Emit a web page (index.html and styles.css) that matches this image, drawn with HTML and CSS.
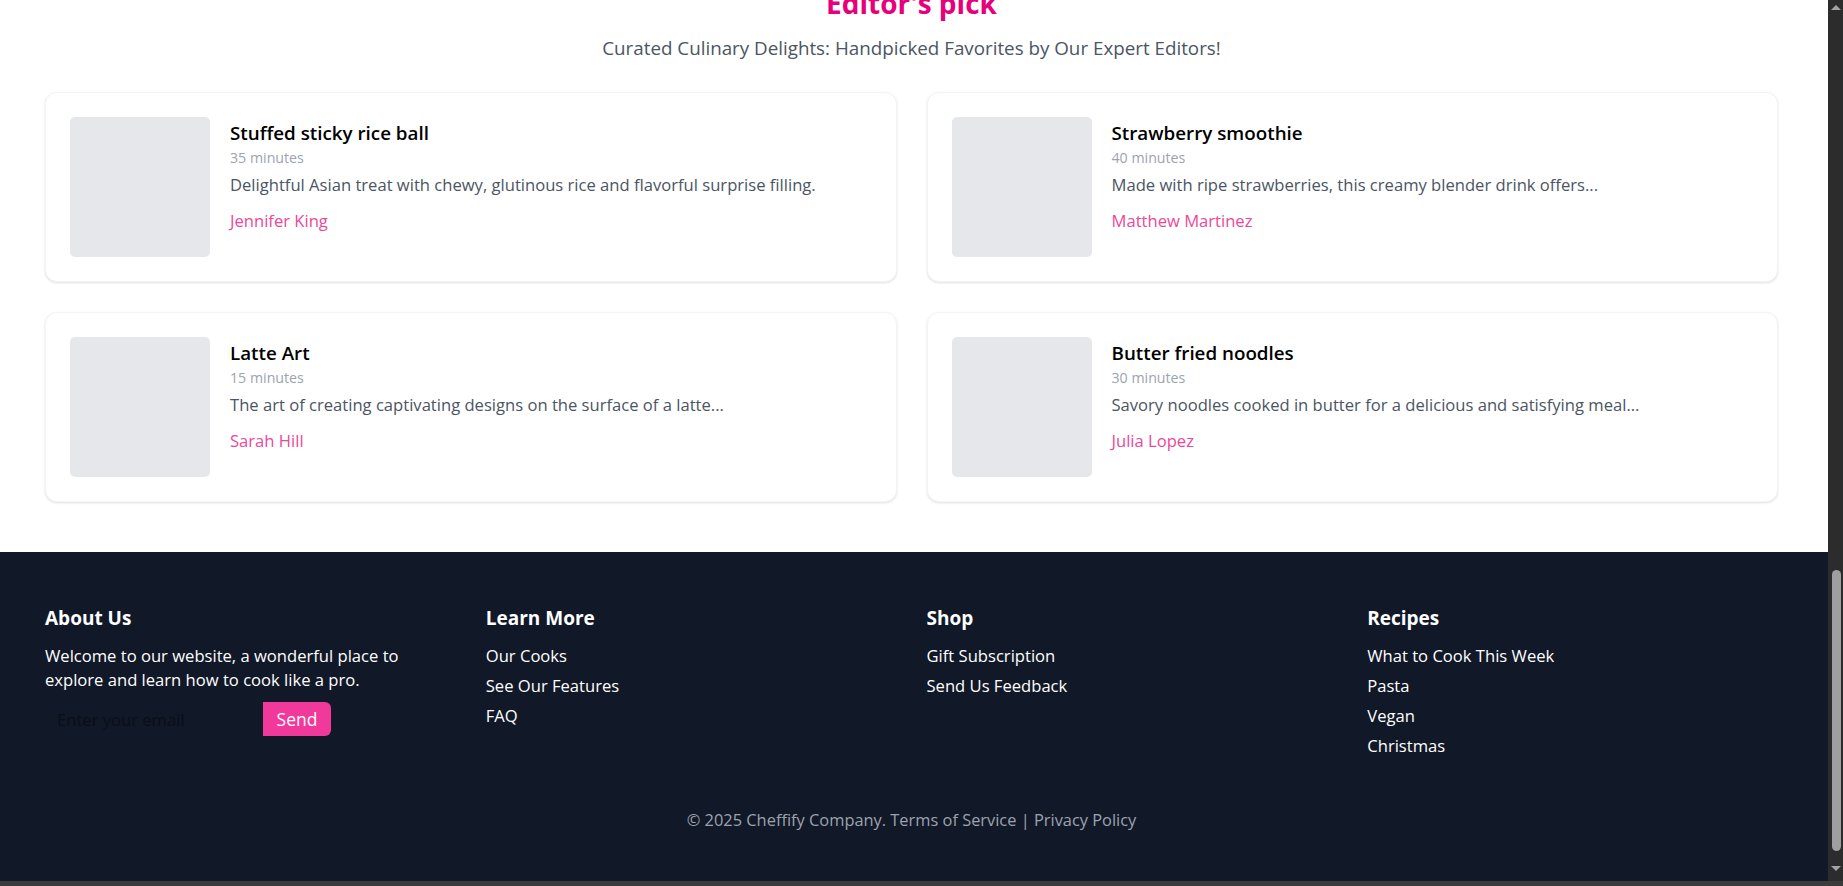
FILE: index.html
```html
<!DOCTYPE html>
<html lang="en">
<head>
<meta charset="utf-8">
<title>Cheffify – Editor's pick</title>
<link rel="stylesheet" href="styles.css">
</head>
<body>
<section class="picks">
  <h2 class="picks-title">Editor's pick</h2>
  <p class="picks-subtitle">Curated Culinary Delights: Handpicked Favorites by Our Expert Editors!</p>
  <div class="picks-grid">
    <article class="recipe-card">
      <div class="recipe-thumb"></div>
      <div class="recipe-body">
        <h3 class="recipe-name">Stuffed sticky rice ball</h3>
        <p class="recipe-time">35 minutes</p>
        <p class="recipe-desc">Delightful Asian treat with chewy, glutinous rice and flavorful surprise filling.</p>
        <a class="recipe-author" href="#">Jennifer King</a>
      </div>
    </article>
    <article class="recipe-card">
      <div class="recipe-thumb"></div>
      <div class="recipe-body">
        <h3 class="recipe-name">Strawberry smoothie</h3>
        <p class="recipe-time">40 minutes</p>
        <p class="recipe-desc">Made with ripe strawberries, this creamy blender drink offers...</p>
        <a class="recipe-author" href="#">Matthew Martinez</a>
      </div>
    </article>
    <article class="recipe-card">
      <div class="recipe-thumb"></div>
      <div class="recipe-body">
        <h3 class="recipe-name">Latte Art</h3>
        <p class="recipe-time">15 minutes</p>
        <p class="recipe-desc">The art of creating captivating designs on the surface of a latte...</p>
        <a class="recipe-author" href="#">Sarah Hill</a>
      </div>
    </article>
    <article class="recipe-card">
      <div class="recipe-thumb"></div>
      <div class="recipe-body">
        <h3 class="recipe-name">Butter fried noodles</h3>
        <p class="recipe-time">30 minutes</p>
        <p class="recipe-desc">Savory noodles cooked in butter for a delicious and satisfying meal...</p>
        <a class="recipe-author" href="#">Julia Lopez</a>
      </div>
    </article>
  </div>
</section>
<footer class="site-footer">
  <div class="footer-grid">
    <div class="footer-col">
      <h4 class="footer-heading">About Us</h4>
      <p class="footer-about">Welcome to our website, a wonderful place to explore and learn how to cook like a pro.</p>
      <form class="subscribe">
        <input class="subscribe-input" type="email" placeholder="Enter your email">
        <button class="subscribe-btn" type="button">Send</button>
      </form>
    </div>
    <div class="footer-col">
      <h4 class="footer-heading">Learn More</h4>
      <ul class="footer-links">
        <li><a href="#">Our Cooks</a></li>
        <li><a href="#">See Our Features</a></li>
        <li><a href="#">FAQ</a></li>
      </ul>
    </div>
    <div class="footer-col">
      <h4 class="footer-heading">Shop</h4>
      <ul class="footer-links">
        <li><a href="#">Gift Subscription</a></li>
        <li><a href="#">Send Us Feedback</a></li>
      </ul>
    </div>
    <div class="footer-col">
      <h4 class="footer-heading">Recipes</h4>
      <ul class="footer-links">
        <li><a href="#">What to Cook This Week</a></li>
        <li><a href="#">Pasta</a></li>
        <li><a href="#">Vegan</a></li>
        <li><a href="#">Christmas</a></li>
      </ul>
    </div>
  </div>
  <p class="footer-copy">© 2025 Cheffify Company. <a href="#">Terms of Service</a> | <a href="#">Privacy Policy</a></p>
</footer>
<div class="scrollbar" aria-hidden="true">
  <span class="sb-arrow sb-up"></span>
  <span class="sb-thumb"></span>
  <span class="sb-arrow sb-down"></span>
</div>
<div class="hscroll-edge" aria-hidden="true"></div>
<script src="script.js"></script>
</body>
</html>
```

FILE: styles.css
```css
html {
  background: #ffffff;
}

body {
  margin: 0 15px 0 0;
  background: #ffffff;
  color: #111827;
  font-family: "Open Sans", "Noto Sans", sans-serif;
  font-size: 16.6px;
  line-height: 24px;
}

.picks {
  padding: 40px 50px 50px 45px;
}

.picks-title {
  margin: 0 0 13px;
  text-align: center;
  font-size: 28px;
  line-height: 36px;
  font-weight: 700;
  color: #e6007a;
}

.picks-subtitle {
  margin: 0 0 30px;
  text-align: center;
  font-size: 18.8px;
  line-height: 28px;
  color: #4b5563;
}

.picks-grid {
  display: grid;
  grid-template-columns: 1fr 1fr;
  gap: 30px;
}

.recipe-card {
  display: flex;
  gap: 20px;
  padding: 24px;
  background: #ffffff;
  border: 1px solid #f3f4f6;
  border-radius: 12px;
  box-shadow: 0 1px 3px rgba(0, 0, 0, 0.08), 0 1px 2px rgba(0, 0, 0, 0.05);
}

.recipe-thumb {
  flex: 0 0 140px;
  height: 140px;
  background: #e5e7eb;
  border-radius: 5px;
}

.recipe-body {
  display: flex;
  flex-direction: column;
  align-items: flex-start;
  min-width: 0;
  padding-top: 2px;
}

.recipe-name {
  margin: 0;
  font-size: 18.8px;
  line-height: 28px;
  font-weight: 600;
  color: #000000;
}

.recipe-time {
  margin: 1px 0 0;
  font-size: 14.2px;
  line-height: 20px;
  color: #9ca3af;
}

.recipe-desc {
  margin: 5px 0 0;
  color: #4b5563;
}

.recipe-author {
  margin-top: 12px;
  color: #ec4899;
  text-decoration: none;
}

.site-footer {
  background: #111827;
  color: #ffffff;
  padding: 52px 50px 54px 45px;
}

.footer-grid {
  display: grid;
  grid-template-columns: repeat(4, 1fr);
  gap: 30px;
  align-items: start;
}

.footer-heading {
  margin: 0 0 12px;
  font-size: 19px;
  line-height: 28px;
  font-weight: 700;
}

.footer-about {
  margin: 0;
  max-width: 395px;
}

.subscribe {
  display: flex;
  margin: 10px 0 0;
}

.subscribe-input {
  width: 218px;
  height: 34px;
  box-sizing: border-box;
  padding: 0 12px;
  border: 0;
  background: transparent;
  font-family: inherit;
  font-size: 16.6px;
  color: #111827;
  outline: none;
}

.subscribe-input::placeholder {
  color: #0b0f18;
  opacity: 1;
}

.subscribe-btn {
  width: 68px;
  height: 34px;
  padding: 0;
  border: 0;
  border-radius: 0 6px 6px 0;
  background: #f0399b;
  color: #ffffff;
  font-family: "Open Sans", sans-serif;
  font-size: 17.5px;
  line-height: 34px;
}

.footer-links {
  list-style: none;
  margin: 0;
  padding: 0;
}

.footer-links li {
  margin-bottom: 6px;
}

.footer-links li:last-child {
  margin-bottom: 0;
}

.footer-links a {
  color: #ffffff;
  text-decoration: none;
}

.footer-copy {
  margin: 50px 0 0;
  text-align: center;
  font-size: 16.4px;
  color: #9ca3af;
}

.footer-copy a {
  color: #9ca3af;
  text-decoration: none;
}

/* window chrome: the dark browser scrollbar at the right edge */
.scrollbar {
  position: fixed;
  top: 0;
  right: 0;
  width: 15px;
  height: 881px;
  box-sizing: border-box;
  padding: 5px 0 10px;
  display: flex;
  flex-direction: column;
  align-items: center;
  background: #2c2c2c;
}

.sb-arrow {
  width: 0;
  height: 0;
  border-left: 5px solid transparent;
  border-right: 5px solid transparent;
}

.sb-up {
  border-bottom: 5px solid #a3a3a3;
}

.sb-down {
  border-top: 5px solid #a3a3a3;
  margin-top: 15px;
}

.sb-thumb {
  margin-top: auto;
  width: 9px;
  height: 281px;
  margin-left: 2px;
  border-radius: 5px;
  background: #9f9f9f;
}

.hscroll-edge {
  position: fixed;
  left: 0;
  right: 0;
  bottom: 0;
  height: 5px;
  background: #3b3b3b;
}
```

FILE: script.js
```js
function scrollToEnd() {
  window.scrollTo(0, document.documentElement.scrollHeight);
}
scrollToEnd();
window.addEventListener('load', scrollToEnd);
```
